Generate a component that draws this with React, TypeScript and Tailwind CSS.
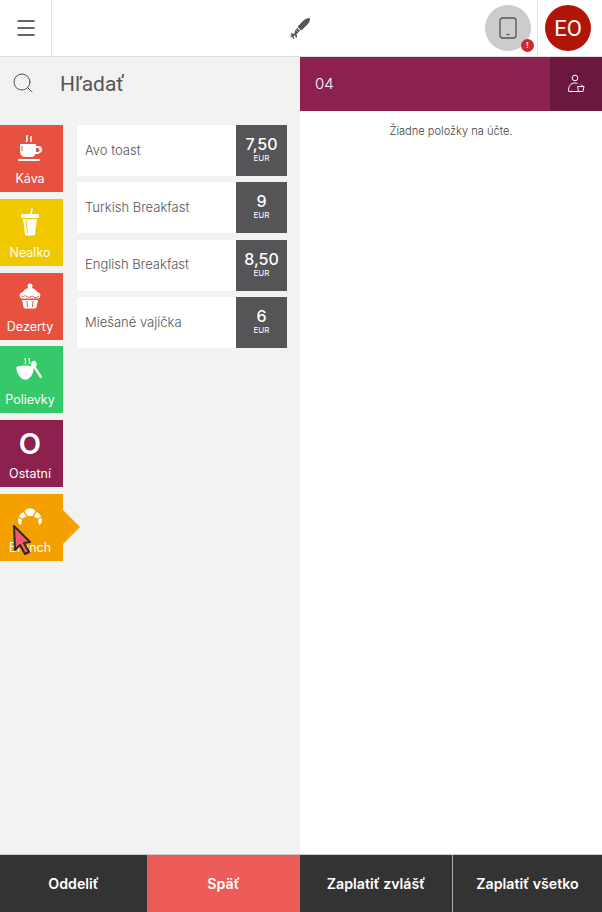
import { Menu, Search } from 'lucide-react';
import type { ReactNode } from 'react';

const coffee = (
  <svg width="26" height="28" viewBox="0 0 26 28" fill="white">
    <path d="M10 0c-2.500 2.500.5 3.500-1.500 7h1.800c2-3.500-1-4.500 1-7zM14 1c-2 2 .5 3-1 6h1.500c1.500-3-1-4 .8-6z" />
    <path d="M3 9h16v2h2.500c2.500 0 3.500 1.500 3.500 3.500S23 19 20.500 19h-2c-.8 1.500-2 3-3.500 3H8c-3 0-5-3-5-6zm16 4v4h1.500c1.200 0 2-.9 2-2s-.8-2-2-2z" fillRule="evenodd" />
    <path d="M5 11v5" stroke="#e65140" strokeWidth="1" />
    <rect x="1" y="24" width="22" height="2" rx="1" />
  </svg>
);

const drink = (
  <svg width="20" height="30" viewBox="0 0 20 30" fill="white">
    <path d="M10 7l1.500-6 1.500.4L11.700 7z" />
    <rect x="1" y="7" width="18" height="4" rx="1" />
    <path d="M3 12h14l-2 15c0 1-1 1.500-2 1.500H7c-1 0-2-.5-2-1.500z" />
    <path d="M6 13l1.500 13" stroke="#f1c700" strokeWidth="1" />
  </svg>
);

const cupcake = (
  <svg width="24" height="26" viewBox="0 0 24 26" fill="white">
    <circle cx="12" cy="3" r="2.500" />
    <path d="M12 5c4 0 6 2 7 4 3 .5 4 3 3 5-.5 1-1.500 1.500-2.500 1.500h-15c-1 0-2-.5-2.500-1.500-1-2 0-4.500 3-5 1-2 3-4 7-4z" />
    <path d="M4 17h16l-1.500 7c-.2 1-1 1.500-2 1.500h-9c-1 0-1.800-.5-2-1.500z" />
    <path d="M3 13c2 2 3-1 5 0s2 2 4 1 3-1 4 0 3 1 5-1" stroke="#e65140" strokeWidth="1" fill="none" />
    <path d="M9 18l.5 6M15 18l-.5 6" stroke="#e65140" strokeWidth="1" />
  </svg>
);

const soup = (
  <svg width="28" height="26" viewBox="0 0 28 26" fill="white">
    <path d="M9 1c-1.500 2 1 3-.5 6h1.300c1.500-3-1-4 .5-6zM13 1c-1.500 2 1 3-.5 6h1.300c1.500-3-1-4 .5-6z" />
    <path d="M.5 10c5-2 12-2 17 0 .8 5-2.500 11-6.500 12.500H7.500C3.500 21 0 15 .5 10z" />
    <path d="M17 4c1.800-.8 3.500.5 3.800 2.500.2 1.500-.4 2.500-1.300 3l6.800 10.500-2 1.300-6.800-10.800c-1.500 0-2.500-1-2.700-2.500-.2-1.500 1-3.500 2.200-4z" />
  </svg>
);

const croissant = (
  <svg width="26" height="18" viewBox="0 0 26 18" fill="white">
    <path d="M7.500 3C9 1 11 .5 13 .5s4 .5 5.500 2.500l-3 5h-5z" />
    <path d="M6.300 4l3 4.500-4 2-3.300-1.500C2.500 7 4 5 6.300 4zM19.700 4l-3 4.500 4 2 3.300-1.500C23.500 7 22 5 19.700 4z" />
    <path d="M1.500 10l3.500 1.500-1 5.500c-2.500-1-3.500-4-2.500-7zM24.500 10L21 11.500l1 5.500c2.500-1 3.500-4 2.500-7z" />
  </svg>
);

const categories: { label: string; bg: string; icon: ReactNode }[] = [
  { label: 'Káva', bg: 'bg-[#e65140]', icon: coffee },
  { label: 'Nealko', bg: 'bg-[#f1c700]', icon: drink },
  { label: 'Dezerty', bg: 'bg-[#e65140]', icon: cupcake },
  { label: 'Polievky', bg: 'bg-[#36c96a]', icon: soup },
  { label: 'Ostatní', bg: 'bg-[#8c214e]', icon: <span className="text-[29px] leading-none font-semibold">O</span> },
  { label: 'Brunch', bg: 'bg-[#f4a100]', icon: croissant },
];

const items = [
  { name: 'Avo toast', price: '7,50' },
  { name: 'Turkish Breakfast', price: '9' },
  { name: 'English Breakfast', price: '8,50' },
  { name: 'Miešané vajíčka', price: '6' },
];

export default function App() {
  return (
    <div className="h-[912px] w-[602px] flex flex-col overflow-hidden bg-white font-['Inter',sans-serif] relative">
      {/* Top bar */}
      <header className="h-[57px] shrink-0 flex items-stretch bg-white border-b border-[#dddddd]">
        <div className="w-[52px] flex items-center justify-center border-r border-[#e2e2e2]">
          <Menu size={24} strokeWidth={1.5} className="text-[#333333]" />
        </div>
        <div className="flex-1 flex items-center justify-center pl-[63px]">
          <svg width="24" height="24" viewBox="0 0 24 24" fill="#555555">
            <path d="M22 2c.2 2.500-1 5-2.800 6.800l-6 5.700-3.700-3.700 5.700-6C17 3 19.500 1.800 22 2z" />
            <path d="M9.300 12l2.700 2.700-1.600 1.600-2.700-2.700z" />
            <path d="M7.500 13.700l2.800 2.800-1.800 1.800.7 2.700-1.200 1-1-3-1.500 1.500 1 2.500-1.300-.2-.9-2.100-1.300.3-.8-1.200 2.300-.7-2-.9.800-1.100 2.900 1z" />
          </svg>
        </div>
        <div className="w-[52px] flex items-center">
          <div className="relative w-[46px] h-[46px] rounded-full bg-[#cccccc] flex items-center justify-center">
            <svg width="18" height="22" viewBox="0 0 18 22" fill="none" stroke="#555555" strokeWidth="1.300">
              <rect x="1" y="1" width="16" height="20" rx="2.500" />
              <path d="M7.500 17.500h3" />
            </svg>
            <span className="absolute right-[-3px] bottom-[-1px] w-[13px] h-[13px] rounded-full bg-[#cc2b2b] text-white text-[7px] leading-[13px] text-center font-bold">!</span>
          </div>
        </div>
        <div className="w-[65px] flex items-center pl-[7px] border-l border-[#e2e2e2]">
          <div className="w-[46px] h-[46px] rounded-full bg-[#b01508] flex items-center justify-center text-white text-[22px] font-['Roboto',sans-serif]">EO</div>
        </div>
      </header>

      <div className="flex-1 flex min-h-0">
        {/* Left side: search, categories, products */}
        <div className="w-[300px] flex flex-col bg-[#f2f2f2]">
          <div className="h-[54px] shrink-0 flex items-center pl-[11px] gap-[25px]">
            <Search size={24} strokeWidth={1} className="text-[#555555] -mt-[2px]" />
            <span className="font-['Roboto',sans-serif] text-[21px] text-[#555555] mt-[2px]">Hľadať</span>
          </div>
          <div className="flex pt-[14px]">
            <div className="w-[63px] flex flex-col gap-[6.800px]">
              {categories.map((c, i) => (
                <div key={c.label} className={`relative h-[67px] ${c.bg} text-white flex flex-col items-center pr-[3px]`}>
                  <div className="h-[47px] flex items-center justify-center">{c.icon}</div>
                  <span className="text-[12.500px] leading-[14px]">{c.label}</span>
                  {i === 5 && (
                    <div className="absolute left-[63px] top-[16px] w-0 h-0 border-y-[17px] border-y-transparent border-l-[17px] border-l-[#f4a100]" />
                  )}
                </div>
              ))}
            </div>
            <div className="ml-[14px] w-[210px] flex flex-col gap-[6.300px]">
              {items.map((item) => (
                <div key={item.name} className="h-[51px] flex bg-white">
                  <div className="flex-1 flex items-center pl-[8px] text-[13px] font-light text-[#555555]">{item.name}</div>
                  <div className="w-[51px] bg-[#555558] text-white flex flex-col items-center justify-center gap-[1px] pb-[2px]">
                    <span className="text-[16px] leading-[16px] font-medium">{item.price}</span>
                    <span className="text-[8px] leading-[10px]">EUR</span>
                  </div>
                </div>
              ))}
            </div>
          </div>
        </div>

        {/* Right side: bill */}
        <div className="w-[302px] flex flex-col bg-white">
          <div className="h-[54px] shrink-0 flex bg-[#8c214e] text-white">
            <div className="flex-1 flex items-center pl-[15px] text-[15px] font-light">04</div>
            <div className="w-[52px] bg-[#6c173d] flex items-center justify-center">
              <svg width="18" height="20" viewBox="0 0 18 20" fill="none" stroke="white" strokeWidth="1">
                <circle cx="8" cy="4" r="2.800" />
                <path d="M1.500 17c0-5 2-8 6.500-8 1 0 2 .2 2.500.5" />
                <path d="M1.500 17.500h9.500M10.500 12.500h6.500l-1 5h-4.500zM14 10.500l2 2" />
              </svg>
            </div>
          </div>
          <p className="pt-[12px] text-center text-[11.100px] font-light text-[#444444]">Žiadne položky na účte.</p>
        </div>
      </div>

      {/* Bottom buttons */}
      <footer className="h-[58px] shrink-0 flex border-t border-[#cccccc] text-white text-[14.200px] font-semibold">
        <div className="w-[147px] bg-[#333333] flex items-center justify-center">Oddeliť</div>
        <div className="w-[153px] bg-[#ee5c5a] flex items-center justify-center">Späť</div>
        <div className="w-[153px] bg-[#333333] border-r border-[#aaaaaa] flex items-center justify-center">Zaplatiť zvlášť</div>
        <div className="flex-1 bg-[#333333] flex items-center justify-center">Zaplatiť všetko</div>
      </footer>

      {/* Mouse pointer from the recording */}
      <svg className="absolute left-[11px] top-[524px]" width="22" height="32" viewBox="0 0 22 32">
        <path d="M3 2l16 16-6 1 5 9-4 2-5-9-5 5z" fill="#f4596a" stroke="#2a2a2a" strokeWidth="2" strokeLinejoin="round" />
      </svg>
    </div>
  );
}
